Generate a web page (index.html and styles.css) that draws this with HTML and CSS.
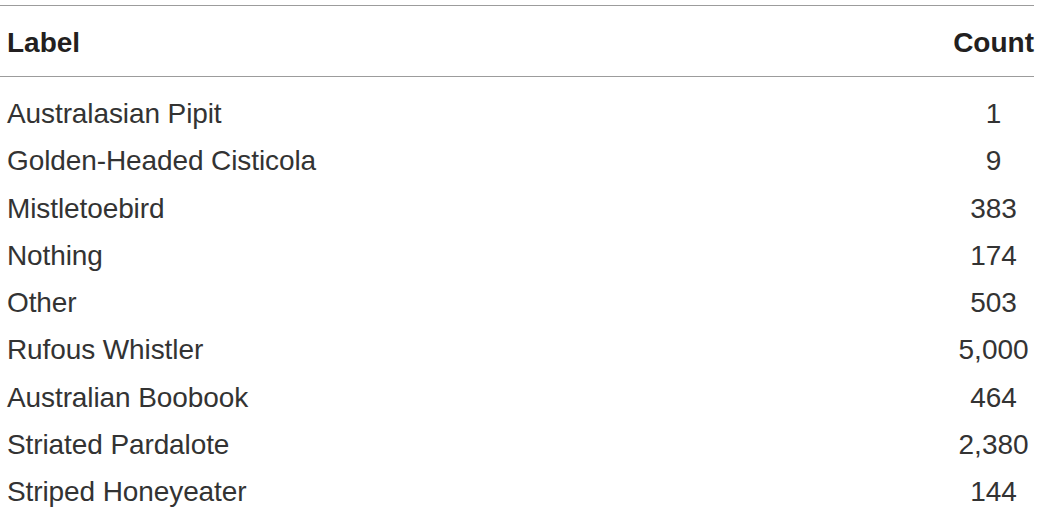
FILE: index.html
```html
<!DOCTYPE html>
<html lang="en">
<head>
<meta charset="utf-8">
<title>Label counts</title>
<link rel="stylesheet" href="styles.css">
</head>
<body>
<table class="counts">
  <thead>
    <tr>
      <th class="label-col">Label</th>
      <th class="count-col">Count</th>
    </tr>
  </thead>
  <tbody>
    <tr><td class="label">Australasian Pipit</td><td class="num">1</td></tr>
    <tr><td class="label">Golden-Headed Cisticola</td><td class="num">9</td></tr>
    <tr><td class="label">Mistletoebird</td><td class="num">383</td></tr>
    <tr><td class="label">Nothing</td><td class="num">174</td></tr>
    <tr><td class="label">Other</td><td class="num">503</td></tr>
    <tr><td class="label">Rufous Whistler</td><td class="num">5,000</td></tr>
    <tr><td class="label">Australian Boobook</td><td class="num">464</td></tr>
    <tr><td class="label">Striated Pardalote</td><td class="num">2,380</td></tr>
    <tr><td class="label">Striped Honeyeater</td><td class="num">144</td></tr>
  </tbody>
</table>
</body>
</html>
```

FILE: styles.css
```css
html, body {
  margin: 0;
  padding: 0;
  background: #ffffff;
}

body {
  font-family: "Liberation Sans", Arial, sans-serif;
  color: #231f20;
  overflow: hidden;
}

.counts {
  width: 1034px;
  margin-top: 5px;
  border-collapse: collapse;
  border-top: 1px solid #9c9c9c;
}

.counts thead tr {
  border-bottom: 1px solid #9c9c9c;
}

.counts th {
  font-size: 28px;
  font-weight: bold;
  line-height: 32px;
  padding: 21px 0 17px 7px;
  color: #231f20;
}

.counts .label-col {
  text-align: left;
}

.counts .count-col {
  text-align: right;
  width: 1px;
  white-space: nowrap;
  padding-left: 0;
}

.counts td {
  font-size: 28px;
  font-weight: normal;
  line-height: 47.25px;
  padding: 0;
  color: #333333;
}

.counts td.label {
  padding-left: 7px;
  letter-spacing: -0.1px;
}

.counts td.num {
  text-align: center;
}

.counts tbody tr:first-child td {
  padding-top: 13px;
}
```
